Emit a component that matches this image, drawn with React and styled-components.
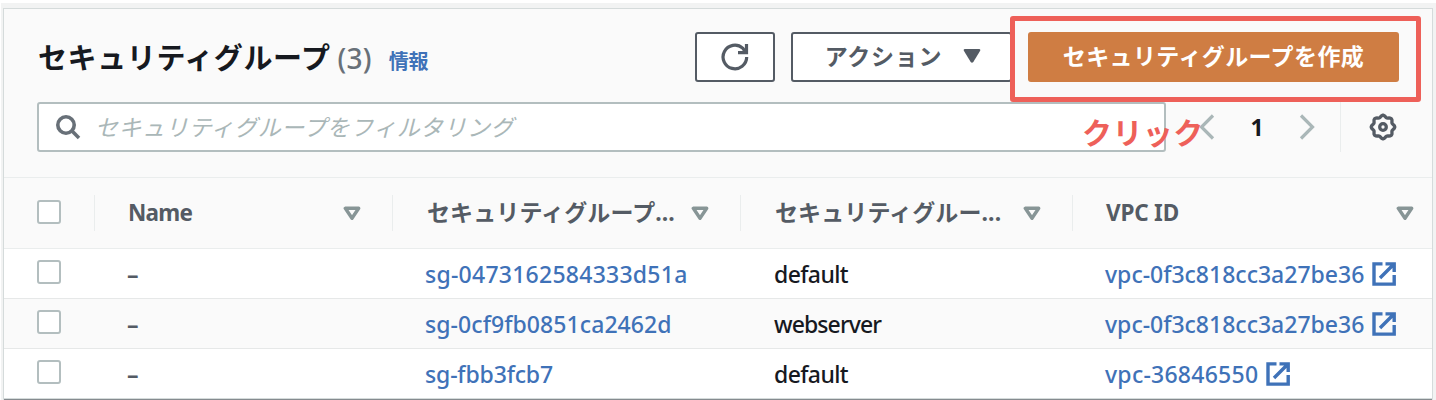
import React from "react";
import styled, { createGlobalStyle } from "styled-components";

const GlobalStyle = createGlobalStyle`
  *, *::before, *::after { box-sizing: border-box; }
  html, body { margin: 0; padding: 0; background: #fff; }
  body {
    height: 400px;
    overflow: hidden;
    font-family: "Noto Sans", "Noto Sans CJK JP", sans-serif;
    color: #16191f;
  }
  svg { flex: none; }
`;

const Page = styled.div`
  position: relative;
  height: 400px;
  padding: 3px 0 0 1px;
  overflow: hidden;
`;

const Backdrop = styled.div`
  height: 397px;
  padding: 6px 3px 2px;
  background: #f2f3f3;
`;

const Panel = styled.section`
  width: 1428px;
  height: 389px;
  background: #fff;
  box-shadow: 0 0 0 1px #d5dbdb, 0 2px 1px 0 #858b8f;
`;

const PanelHeader = styled.header`
  height: 169px;
  padding: 23px 33px 0;
  background: #fafafa;
  border-bottom: 1px solid #eaeded;
`;

const TitleBar = styled.div`
  display: flex;
  align-items: flex-start;
  justify-content: space-between;
  height: 70px;
`;

const Heading = styled.h1`
  display: flex;
  align-items: baseline;
  margin: 0;
  padding-left: 1px;
  height: 50px;
  line-height: 52px;
  font-size: 29px;
  font-weight: 700;
  letter-spacing: 0.6px;
  white-space: nowrap;
`;

const Count = styled.span`
  margin-left: 7px;
  color: #687078;
  font-size: 28px;
  font-weight: 500;
  letter-spacing: 0.2px;
`;

const InfoLink = styled.a`
  margin-left: 17px;
  color: #3f72b8;
  font-size: 20px;
  font-weight: 700;
  letter-spacing: 0;
`;

const Actions = styled.div`
  display: flex;
  gap: 16px;
`;

const Button = styled.button`
  display: flex;
  align-items: center;
  justify-content: center;
  width: ${(p) => p.$width}px;
  height: 50px;
  padding: 0 0 2px;
  gap: 21px;
  border: ${(p) => (p.$primary ? "0" : "2px solid #545b64")};
  border-radius: 3px;
  background: ${(p) => (p.$primary ? "#cf7d43" : "#fff")};
  color: ${(p) => (p.$primary ? "#fff" : "#545b64")};
  font: 700 23px/46px "Noto Sans", "Noto Sans CJK JP", sans-serif;
  letter-spacing: ${(p) => p.$spacing || 0}px;
  white-space: nowrap;
`;

const ButtonLabel = styled.span`
  padding-left: 3px;
`;

const FilterBar = styled.div`
  display: flex;
  align-items: center;
  height: 50px;
`;

const SearchBox = styled.div`
  display: flex;
  align-items: center;
  width: 1129px;
  height: 50px;
  padding-left: 15px;
  gap: 13px;
  border: 2px solid #b3bebf;
  border-radius: 3px;
  background: #fff;
`;

const Placeholder = styled.span`
  color: #aab7b8;
  font-size: 23px;
  line-height: 46px;
  font-style: italic;
  letter-spacing: 0.45px;
  white-space: nowrap;
`;

const Pager = styled.nav`
  display: flex;
  align-items: center;
  width: 175px;
  height: 50px;
  padding-left: 33px;
  border-right: 1px solid #eaeded;
`;

const PageNumber = styled.span`
  width: 14px;
  margin: 0 35px;
  font-size: 23px;
  font-weight: 700;
  line-height: 46px;
  text-align: center;
`;

const SettingsSlot = styled.div`
  display: flex;
  margin-left: 28px;
`;

const Grid = styled.div`
  display: grid;
  grid-template-columns: 90px 298px 348px 332px 360px;
  height: ${(p) => p.$height}px;
  align-items: center;
`;

const TableHead = styled(Grid)`
  background: #fafafa;
  border-bottom: 1px solid #eaeded;
`;

const Row = styled(Grid)`
  background: ${(p) => (p.$striped ? "#fafafa" : "#fff")};
  border-bottom: ${(p) => (p.$last ? "0" : "1px solid #e6e8e8")};
`;

const CheckCell = styled.div`
  padding-left: 33px;
`;

const Checkbox = styled.span`
  display: block;
  width: 24px;
  height: 24px;
  border: 2px solid #b3bebf;
  border-radius: 3px;
  background: #fff;
  margin-top: ${(p) => p.$shift || 0}px;
`;

const HeadCell = styled.div`
  display: flex;
  align-items: center;
  justify-content: space-between;
  height: 36px;
  padding: 0 ${(p) => p.$right || 31}px 0 ${(p) => p.$left || 33}px;
  border-left: 1px solid #eaeded;
  color: #545b64;
  font-size: ${(p) => p.$size || 23}px;
  font-weight: 700;
  letter-spacing: ${(p) => p.$spacing || 0}px;
  line-height: 34px;
  white-space: nowrap;
`;

const HeadLabel = styled.span`
  margin-top: ${(p) => p.$shift ?? -2}px;
`;

const Cell = styled.div`
  display: flex;
  align-items: center;
  gap: 8px;
  padding-left: ${(p) => p.$left || 33}px;
  color: ${(p) => (p.$muted ? "#545b64" : p.$link ? "#3f72b8" : "#16191f")};
  font-size: 23px;
  font-weight: ${(p) => (p.$muted ? 700 : 500)};
  line-height: 46px;
  letter-spacing: ${(p) => p.$spacing || 0}px;
  white-space: nowrap;
`;

const Highlight = styled.div`
  position: absolute;
  left: 1010px;
  top: 16px;
  width: 411px;
  height: 86px;
  border: 5px solid #ee6059;
  border-radius: 3px;
`;

const ClickNote = styled.div`
  position: absolute;
  left: 1082px;
  top: 111px;
  color: #ee6059;
  font-size: 30px;
  font-weight: 700;
  line-height: 44px;
  letter-spacing: 0.4px;
  white-space: nowrap;
`;

const SearchIcon = () => (
  <svg width="28" height="28" viewBox="0 0 28 28" fill="none" stroke="#687078" strokeWidth="3.6">
    <circle cx="12" cy="12" r="8.2" />
    <path d="M17.8 17.8 25 25" />
  </svg>
);

const RefreshIcon = () => (
  <svg width="32" height="32" viewBox="0 0 32 32" fill="none" stroke="#545b64" strokeWidth="3.2">
    <path d="M27.700 17a11.800 11.800 0 1 1-4-8.900L26.500 12" />
    <path d="M27.500 4v8.700H19" />
  </svg>
);

const DownTriangle = () => (
  <svg width="18" height="14" viewBox="0 0 18 14" fill="#545b64">
    <path d="M2 0h14q2 0 1 2l-6.700 11q-1.300 1.500-2.600 0L1 2Q0 0 2 0z" />
  </svg>
);

const SortIcon = () => (
  <svg width="18" height="15" viewBox="0 0 18 15" fill="none" stroke="#879596" strokeWidth="3.400" strokeLinejoin="round">
    <path d="M2.300 2.300h13.400L9 12.300z" />
  </svg>
);

const Chevron = ({ right }) => (
  <svg width="16" height="26" viewBox="0 0 16 26" fill="none" stroke="#aab7b8" strokeWidth="3.200">
    <path d={right ? "M2 1.500 13.500 13 2 24.500" : "M14 1.500 2.500 13 14 24.500"} />
  </svg>
);

const gearPath = Array.from({ length: 64 }, (_, i) => {
  const a = (i / 64) * Math.PI * 2;
  const r = 10.8 + 1 * Math.cos(a * 8);
  return `${i ? "L" : "M"}${(14 + r * Math.cos(a)).toFixed(2)} ${(14 + r * Math.sin(a)).toFixed(2)}`;
}).join("") + "z";

const GearIcon = () => (
  <svg width="28" height="28" viewBox="0 0 28 28" fill="none" stroke="#545b64" strokeWidth="3.300">
    <path d={gearPath} strokeLinejoin="round" />
    <circle cx="14" cy="14" r="3.300" />
  </svg>
);

const ExternalIcon = () => (
  <svg width="24" height="24" viewBox="0 0 24 24" fill="none" stroke="#3f72b8" strokeWidth="3.400">
    <path d="M10.500 1.900H2v20.200h20.200v-9" />
    <path d="M13.500 1.900h8.700V10M21.500 2.500 8 16" />
  </svg>
);

const rows = [
  { id: "sg-0473162584333d51a", idSpacing: 0.25, name: "default", nameSpacing: -0.6, vpc: "vpc-0f3c818cc3a27be36", vpcSpacing: 0 },
  { id: "sg-0cf9fb0851ca2462d", idSpacing: 0.08, name: "webserver", nameSpacing: -0.9, vpc: "vpc-0f3c818cc3a27be36", vpcSpacing: 0 },
  { id: "sg-fbb3fcb7", idSpacing: -0.15, name: "default", nameSpacing: -0.6, vpc: "vpc-36846550", vpcSpacing: 0.25 },
];

export default function App() {
  return (
    <Page>
      <GlobalStyle />
      <Backdrop>
        <Panel>
          <PanelHeader>
            <TitleBar>
              <Heading>
                セキュリティグループ<Count>(3)</Count>
                <InfoLink>情報</InfoLink>
              </Heading>
              <Actions>
                <Button $width={80} aria-label="更新"><RefreshIcon /></Button>
                <Button $width={221} $spacing={0.7}><ButtonLabel>アクション</ButtonLabel><DownTriangle /></Button>
                <Button $width={371} $spacing={0.4} $primary>セキュリティグループを作成</Button>
              </Actions>
            </TitleBar>
            <FilterBar>
              <SearchBox>
                <SearchIcon />
                <Placeholder>セキュリティグループをフィルタリング</Placeholder>
              </SearchBox>
              <Pager>
                <Chevron />
                <PageNumber>1</PageNumber>
                <Chevron right />
              </Pager>
              <SettingsSlot><GearIcon /></SettingsSlot>
            </FilterBar>
          </PanelHeader>
          <TableHead $height={71}>
            <CheckCell><Checkbox $shift={-3} /></CheckCell>
            <HeadCell $size={22.5} $spacing={-0.7}><HeadLabel $shift={0}>Name</HeadLabel><SortIcon /></HeadCell>
            <HeadCell $left={34} $spacing={0.1}><HeadLabel>セキュリティグループ...</HeadLabel><SortIcon /></HeadCell>
            <HeadCell $left={34} $spacing={0.1}><HeadLabel>セキュリティグルー...</HeadLabel><SortIcon /></HeadCell>
            <HeadCell $right={18} $size={22.5} $spacing={-0.2}><HeadLabel $shift={0}>VPC ID</HeadLabel><SortIcon /></HeadCell>
          </TableHead>
          {rows.map((r, i) => (
            <Row key={r.id} $height={i === 2 ? 49 : 50} $striped={i === 1} $last={i === 2}>
              <CheckCell><Checkbox $shift={-3} /></CheckCell>
              <Cell $muted>–</Cell>
              <Cell $link $spacing={r.idSpacing}>{r.id}</Cell>
              <Cell $left={34} $spacing={r.nameSpacing}>{r.name}</Cell>
              <Cell $link $spacing={r.vpcSpacing}>{r.vpc}<ExternalIcon /></Cell>
            </Row>
          ))}
        </Panel>
      </Backdrop>
      <Highlight />
      <ClickNote>クリック</ClickNote>
    </Page>
  );
}
